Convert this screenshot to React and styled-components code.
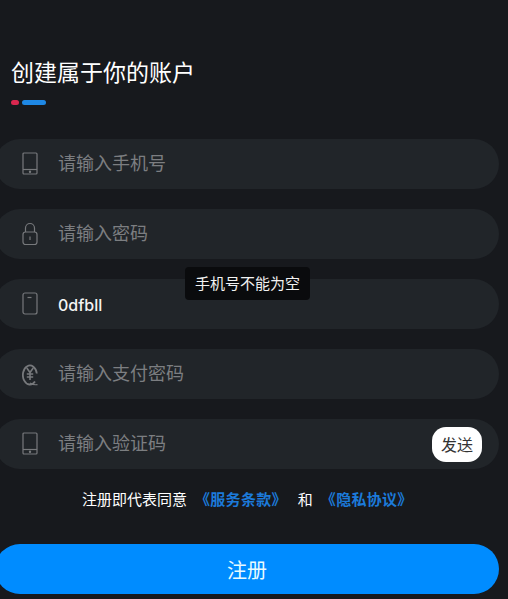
import React from 'react';
import styled, { createGlobalStyle } from 'styled-components';

const GlobalStyle = createGlobalStyle`
  html, body {
    margin: 0;
    padding: 0;
    height: 100%;
    overflow: hidden;
    background: #17191d;
  }
`;

const FONT = `"Liberation Sans", "Noto Sans CJK SC", sans-serif`;

const Page = styled.div`
  position: relative;
  width: 508px;
  height: 599px;
  overflow: hidden;
  background: #17191d;
  font-family: ${FONT};
`;

const Title = styled.h1`
  margin: 0;
  padding: 58px 0 0 11px;
  font-size: 23px;
  line-height: 30px;
  font-weight: 400;
  color: #fff;
`;

const Accent = styled.div`
  display: flex;
  gap: 3px;
  margin: 12px 0 0 11px;
`;

const AccentBar = styled.span`
  display: block;
  width: ${({ $w }) => $w}px;
  height: 5px;
  border-radius: 3px;
  background: ${({ $color }) => $color};
`;

const Form = styled.div`
  display: flex;
  flex-direction: column;
  gap: 20px;
  width: 504px;
  margin: 34px 0 0 -5px;
`;

const Row = styled.div`
  display: flex;
  align-items: center;
  height: 50px;
  padding: 0 17px 0 27px;
  box-sizing: border-box;
  border-radius: 25px;
  background: #212529;
`;

const IconBox = styled.svg`
  flex: none;
  width: 16px;
  height: 24px;
  fill: none;
  stroke: #77797c;
  stroke-width: 1.2;
`;

const Field = styled.input`
  flex: 1;
  min-width: 0;
  margin-left: 20px;
  padding: 1px 0 0;
  border: 0;
  outline: 0;
  background: transparent;
  font-family: ${({ $filled }) => ($filled ? `Inter, ${FONT}` : FONT)};
  font-size: ${({ $filled }) => ($filled ? '16px' : '18px')};
  font-weight: ${({ $filled }) => ($filled ? 500 : 400)};
  color: #f4f4f4;

  &::placeholder {
    color: #7c7e81;
    opacity: 1;
  }
`;

const SendButton = styled.button`
  flex: none;
  width: 50px;
  height: 35px;
  padding: 0;
  border: 0;
  border-radius: 14px;
  background: #fff;
  font-family: ${FONT};
  font-size: 16px;
  color: #333;
`;

const Agreement = styled.div`
  display: flex;
  align-items: center;
  margin: 21px 0 0;
  padding-left: 82px;
  height: 20px;
  font-size: 15px;
  line-height: 20px;
  color: #fff;
`;

const Terms = styled.a`
  margin: 0 ${({ $right }) => $right}px 0 8px;
  font-size: 15px;
  letter-spacing: 0.3px;
  font-weight: 700;
  color: #1c7ad9;
`;

const Submit = styled.button`
  display: block;
  width: 504px;
  height: 50px;
  margin: 34px 0 0 -5px;
  padding: 0;
  border: 0;
  border-radius: 25px;
  background: #008cff;
  font-family: ${FONT};
  font-size: 20px;
  color: #e8fbff;
`;

const Toast = styled.div`
  position: absolute;
  left: 185px;
  top: 267px;
  width: 125px;
  height: 33px;
  border-radius: 4px;
  background: #0a0b0d;
  font-size: 15px;
  line-height: 33px;
  text-align: center;
  color: #f2f2f2;
`;

function PhoneIcon() {
  return (
    <IconBox viewBox="0 0 16 24">
      <rect x="1" y="1" width="14" height="21" rx="1" />
      <path d="M1 17.5h14" />
      <circle cx="8" cy="19.8" r="0.6" fill="#77797c" />
    </IconBox>
  );
}

function LockIcon() {
  return (
    <IconBox viewBox="0 0 16 24">
      <path d="M3.5 10V6a4.5 4.5 0 0 1 9 0v4" />
      <rect x="1" y="10" width="14" height="12.5" rx="2.5" />
      <path d="M8 14.5v3.5" />
    </IconBox>
  );
}

function CardIcon() {
  return (
    <IconBox viewBox="0 0 16 24">
      <rect x="1" y="1" width="14" height="21" rx="2" />
      <path d="M5.5 5.5h4" />
    </IconBox>
  );
}

function PayIcon() {
  return (
    <IconBox viewBox="0 0 16 24">
      <path d="M13 19.5A7 9.5 0 1 1 14.8 11.5" strokeWidth="1.8" />
      <path d="M8 21c2.5 1.8 5 2 7.5 1.6" />
      <path d="M4.8 6l3.2 4.5L11.2 6M8 10.5V18M4.8 12h6.4M4.8 15h6.4" strokeWidth="1.6" />
    </IconBox>
  );
}

export default function App() {
  return (
    <Page>
      <GlobalStyle />
      <Title>创建属于你的账户</Title>
      <Accent>
        <AccentBar $w={8} $color="#d9274f" />
        <AccentBar $w={24} $color="#1e88e5" />
      </Accent>
      <Form>
        <Row>
          <PhoneIcon />
          <Field placeholder="请输入手机号" />
        </Row>
        <Row>
          <LockIcon />
          <Field placeholder="请输入密码" />
        </Row>
        <Row>
          <CardIcon />
          <Field $filled defaultValue="0dfbll" />
        </Row>
        <Row>
          <PayIcon />
          <Field placeholder="请输入支付密码" />
        </Row>
        <Row>
          <PhoneIcon />
          <Field placeholder="请输入验证码" />
          <SendButton>发送</SendButton>
        </Row>
      </Form>
      <Agreement>
        注册即代表同意
        <Terms $right={11}>《服务条款》</Terms>
        和
        <Terms $right={0}>《隐私协议》</Terms>
      </Agreement>
      <Submit>注册</Submit>
      <Toast>手机号不能为空</Toast>
    </Page>
  );
}
